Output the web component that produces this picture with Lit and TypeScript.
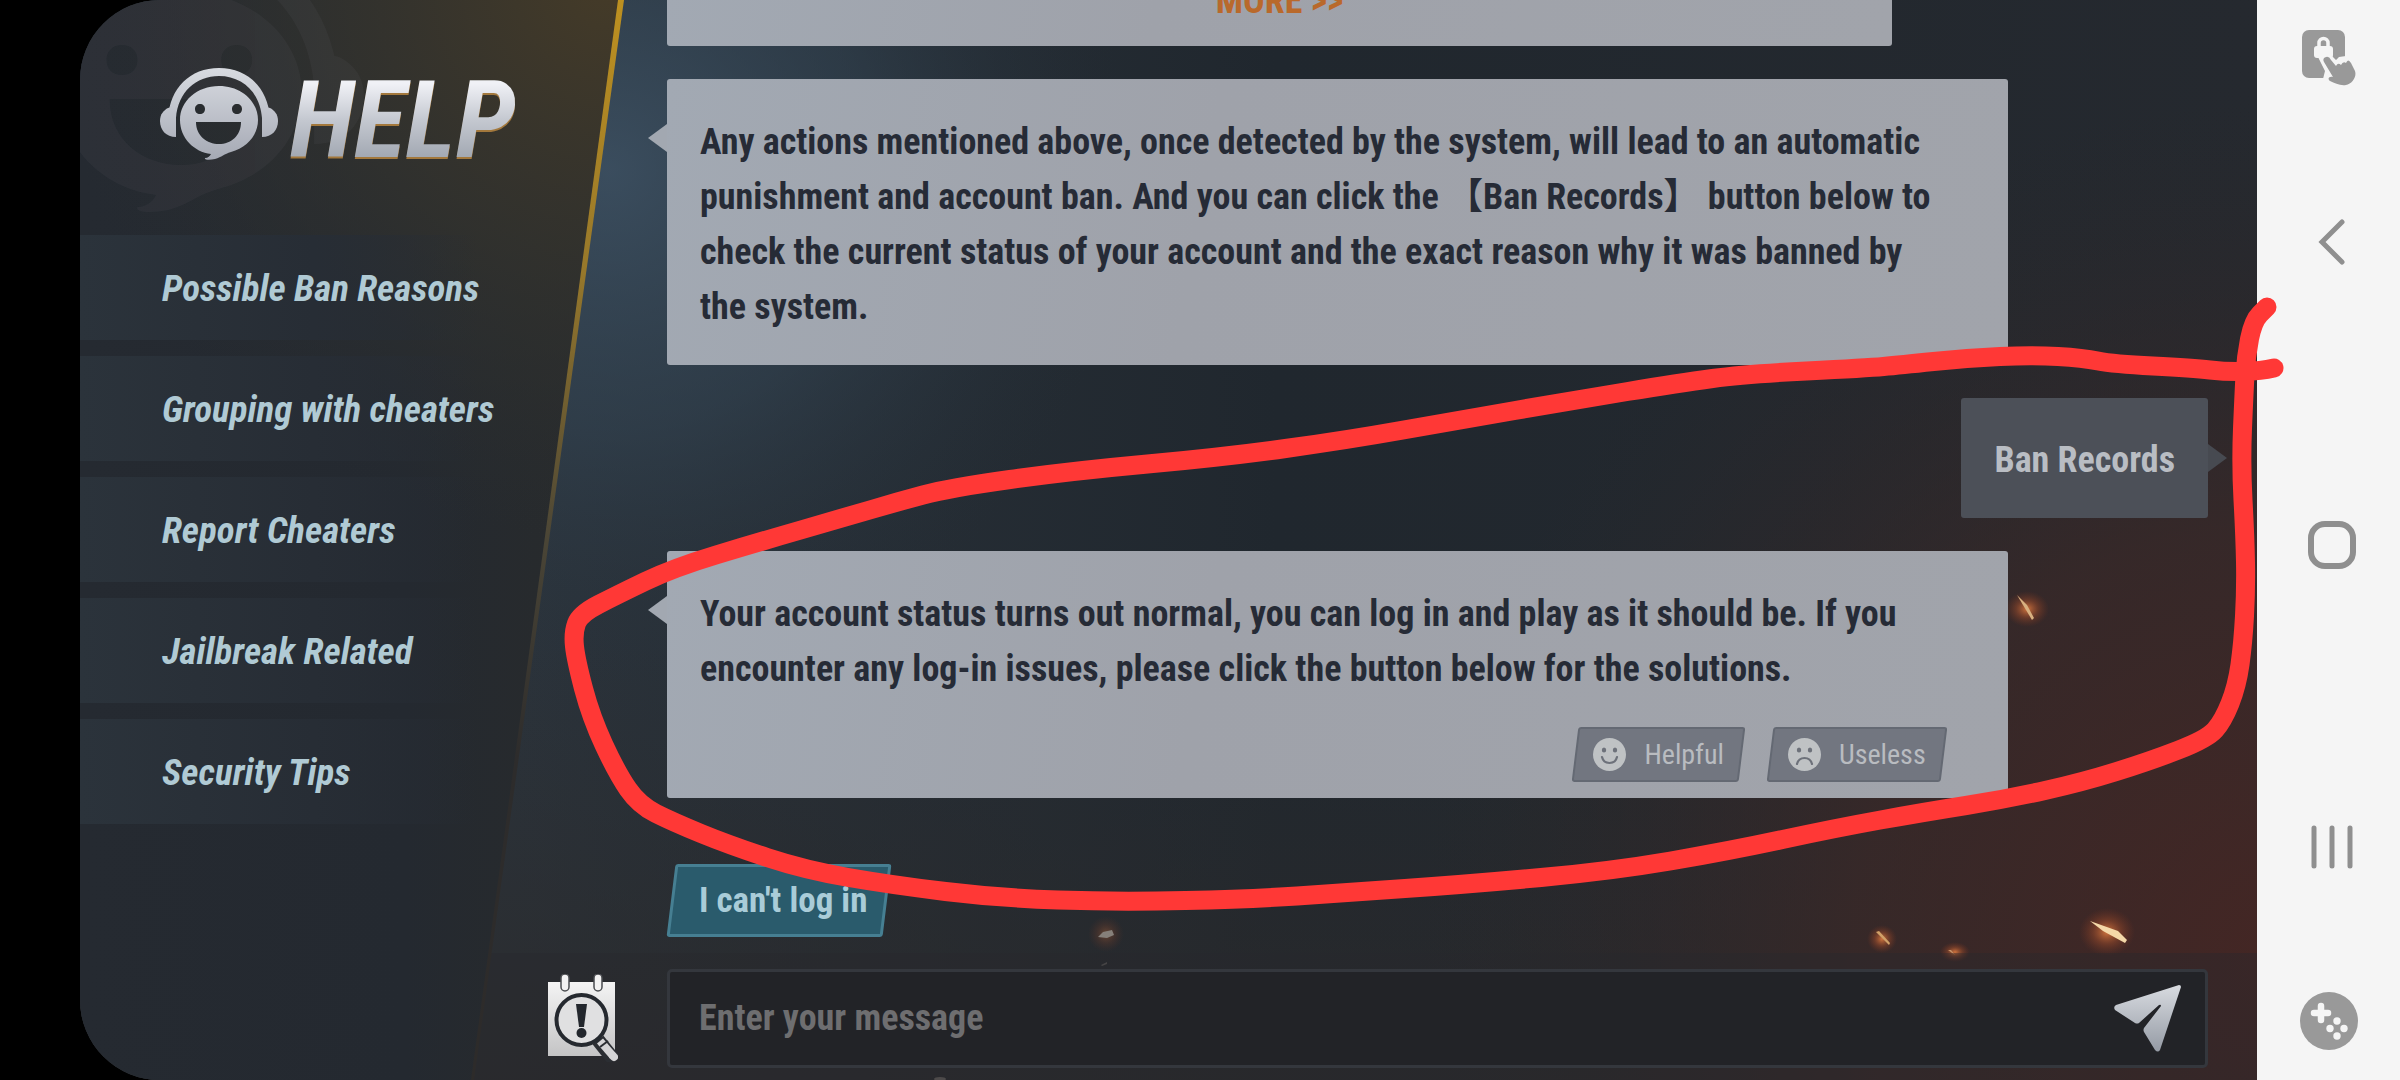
import { LitElement, html, css, svg } from "lit";
import { customElement } from "lit/decorators.js";

const MENU = [
  "Possible Ban Reasons",
  "Grouping with cheaters",
  "Report Cheaters",
  "Jailbreak Related",
  "Security Tips",
];

type Point = [number, number];

// Freehand marker: a loop around the last answer.
const MARKER: Point[] = [
  [2274, 368], [2261, 371], [2227, 372], [2193, 368], [2113, 364], [2083, 358],
  [2033, 355], [1967, 358], [1900, 365], [1867, 368], [1746, 374], [1679, 383],
  [1576, 400], [1454, 421], [1347, 440], [1224, 457], [1071, 471], [949, 488],
  [897, 502], [846, 517], [759, 542], [673, 568], [617, 595], [580, 614],
  [573, 633], [576, 660], [591, 717], [617, 773], [639, 805], [673, 822],
  [729, 845], [805, 870], [892, 885], [999, 898], [1117, 902], [1254, 899],
  [1340, 893], [1470, 884], [1612, 871], [1729, 851], [1836, 828], [1925, 812],
  [2007, 799], [2083, 782], [2150, 761], [2207, 739], [2223, 721], [2237, 686],
  [2243, 643], [2246, 589], [2245, 536], [2241, 464], [2244, 393], [2246, 357],
  [2253, 321], [2267, 307],
];

function smooth(points: Point[]): string {
  let d = `M${points[0][0]} ${points[0][1]}`;
  for (let i = 1; i < points.length - 1; i++) {
    const [x, y] = points[i];
    const [nx, ny] = points[i + 1];
    d += `Q${x} ${y} ${(x + nx) / 2} ${(y + ny) / 2}`;
  }
  const last = points[points.length - 1];
  return `${d}L${last[0]} ${last[1]}`;
}

const headset = svg`
  <path d="M8 50C10 20 30 0 59 0s49 20 51 50h-8C100 24 82 8 59 8S18 24 16 50z"/>
  <path d="M16 38v31C6 69 0 62 0 53c0-7 4-11 8-13z"/>
  <path d="M102 38v31c10 0 16-7 16-16 0-7-4-11-8-13z"/>
  <path fill-rule="evenodd" d="M59 18C37 18 20 33 20 52c0 18 14 32 31 34-1 2-3 4-6 4-1 2 5 2 10 1 7-2 9-5 16-7 16-4 27-17 27-32 0-19-17-34-39-34zM40 36c3 0 5 2 5 5s-2 5-5 5-5-2-5-5 2-5 5-5zM77 36c3 0 5 2 5 5s-2 5-5 5-5-2-5-5 2-5 5-5zM36 54h45c0 14-10 22-22 22s-23-8-23-22z"/>`;

@customElement("game-backdrop")
export class GameBackdrop extends LitElement {
  static styles = css`
    :host { display: block; }
    .art { display: block; width: 100%; height: 100%; }
  `;

  render() {
    return html`<svg class="art" viewBox="0 0 2177 1080" preserveAspectRatio="none" aria-hidden="true">
      <defs>
        <linearGradient id="base" x1="0" y1="0" x2="1" y2="0">
          <stop offset="0.2" stop-color="#2b333b"/>
          <stop offset="0.55" stop-color="#20272e"/>
          <stop offset="1" stop-color="#25292f"/>
        </linearGradient>
        <radialGradient id="blue" gradientUnits="userSpaceOnUse" cx="530" cy="170" r="520">
          <stop offset="0" stop-color="#40566a" stop-opacity="0.75"/>
          <stop offset="0.5" stop-color="#35495a" stop-opacity="0.45"/>
          <stop offset="1" stop-color="#25303a" stop-opacity="0"/>
        </radialGradient>
        <radialGradient id="ember" gradientUnits="userSpaceOnUse" cx="2200" cy="960" r="860">
          <stop offset="0" stop-color="#472623" stop-opacity="0.9"/>
          <stop offset="0.5" stop-color="#3a2827" stop-opacity="0.8"/>
          <stop offset="1" stop-color="#2a2729" stop-opacity="0"/>
        </radialGradient>
        <linearGradient id="floor" x1="0" y1="0" x2="0" y2="1">
          <stop offset="0.6" stop-color="#292a2c" stop-opacity="0"/>
          <stop offset="1" stop-color="#2b2a2b" stop-opacity="0.8"/>
        </linearGradient>
        <linearGradient id="panel" x1="0" y1="0" x2="1" y2="0">
          <stop offset="0" stop-color="#252a31"/>
          <stop offset="0.6" stop-color="#242930"/>
          <stop offset="1" stop-color="#292b2b"/>
        </linearGradient>
        <radialGradient id="olive" gradientUnits="userSpaceOnUse" cx="530" cy="-20" r="560">
          <stop offset="0" stop-color="#453b28"/>
          <stop offset="0.5" stop-color="#34332d" stop-opacity="0.75"/>
          <stop offset="1" stop-color="#2b2f30" stop-opacity="0"/>
        </radialGradient>
        <linearGradient id="gold" x1="0" y1="0" x2="0" y2="1">
          <stop offset="0" stop-color="#bd9020"/>
          <stop offset="0.25" stop-color="#97782b"/>
          <stop offset="0.5" stop-color="#4a4536"/>
          <stop offset="0.7" stop-color="#2d2c2c"/>
          <stop offset="1" stop-color="#2d2b2a"/>
        </linearGradient>
        <radialGradient id="glow">
          <stop offset="0" stop-color="#e07c40" stop-opacity="0.9"/>
          <stop offset="0.5" stop-color="#9a4a2a" stop-opacity="0.5"/>
          <stop offset="1" stop-color="#7a3420" stop-opacity="0"/>
        </radialGradient>
      </defs>
      <rect width="2177" height="1080" fill="url(#base)"/>
      <rect width="2177" height="1080" fill="url(#blue)"/>
      <rect width="2177" height="1080" fill="url(#floor)"/>
      <rect width="2177" height="1080" fill="url(#ember)"/>
      <ellipse cx="1947" cy="609" rx="22" ry="18" fill="url(#glow)"/>
      <path d="M1937 595l6 10 9 15 2-2-7-13z" fill="#d8b080"/>
      <ellipse cx="2027" cy="932" rx="28" ry="24" fill="url(#glow)"/>
      <path d="M2010 921l13 10 22 12 2-3-9-9-14-5z" fill="#f4d8a8"/>
      <ellipse cx="1802" cy="939" rx="15" ry="14" fill="url(#glow)"/>
      <path d="M1796 932l13 13 1-2-11-12z" fill="#d0a068"/>
      <ellipse cx="1875" cy="952" rx="15" ry="10" fill="url(#glow)"/>
      <path d="M1868 950l7 5-4-5z" fill="#c89468"/>
      <ellipse cx="1026" cy="934" rx="18" ry="18" fill="url(#glow)" opacity="0.4"/>
      <path d="M1018 937l5-5 9-2 2 5-7 3z" fill="#86807a"/>
      <path d="M1021 965l6-3 0 2-5 2z" fill="#5a5856"/>
      <ellipse cx="860" cy="1079" rx="6" ry="2" fill="#66615e"/>
      <path d="M409 953H2177V1080H392z" fill="#27292c" opacity="0.4"/>
      <path d="M0 0H542L392 1080H0z" fill="url(#panel)"/>
      <path d="M0 0H542L392 1080H0z" fill="url(#olive)"/>
      <path d="M538 0h6L394 1080h-3z" fill="url(#gold)"/>
      <g transform="translate(-82 -63) scale(3.1 3)" fill="#8a8494" opacity="0.07">${headset}</g>
    </svg>`;
  }
}

@customElement("help-sidebar")
export class HelpSidebar extends LitElement {
  static styles = css`
    :host { display: block; }
    .brand { display: flex; height: 235px; box-sizing: border-box; padding: 68px 0 0 80px; gap: 12px; }
    .face { width: 118px; height: 92px; flex: none; }
    .title {
      margin: 0; font-size: 108px; line-height: 104px; height: 104px; font-style: italic; font-weight: 700;
      background: linear-gradient(#f0f1f6 15%, #c4c8d0 50%, #a3a9b3 85%);
      -webkit-background-clip: text; background-clip: text; color: transparent;
      filter: drop-shadow(0 2px 0 #a3783c); padding-right: 8px;
    }
    .menu { display: flex; flex-direction: column; gap: 16px; }
    .item {
      height: 105px; padding: 2px 0 0 82px; border: 0; text-align: left; font: inherit;
      font-style: italic; font-weight: 700; font-size: 37px; color: #b0cad4; white-space: nowrap;
      background: linear-gradient(90deg, #2b333b, #272d35 50%, rgba(37, 41, 49, 0) 85%);
    }
  `;

  render() {
    return html`
      <header class="brand">
        <svg class="face" viewBox="0 0 118 92" aria-hidden="true">
          <defs><linearGradient id="steel" gradientUnits="userSpaceOnUse" x1="0" y1="0" x2="0" y2="92">
            <stop offset="0" stop-color="#d8dbe1"/><stop offset="1" stop-color="#a5a9b4"/>
          </linearGradient></defs>
          <g fill="url(#steel)">${headset}</g>
        </svg>
        <h1 class="title">HELP</h1>
      </header>
      <nav class="menu" aria-label="Help topics">
        ${MENU.map((label) => html`<button class="item">${label}</button>`)}
      </nav>`;
  }
}

@customElement("chat-panel")
export class ChatPanel extends LitElement {
  static styles = css`
    :host { display: flex; flex-direction: column; min-width: 0; }
    .log {
      flex: 1 1 0; min-height: 0; overflow: hidden; display: flex; flex-direction: column;
      justify-content: flex-end; gap: 33px; padding: 0 49px 16px 119px;
    }
    .bubble {
      position: relative; flex: none; box-sizing: border-box; width: 87%; padding: 36px 60px 30px 33px;
      background: linear-gradient(100deg, #a2a9b3, #9fa2aa 40%, #a1a4ab); border-radius: 3px;
      color: #262b36; font-size: 36px; line-height: 55px; font-weight: 700;
    }
    .bubble p { margin: 0; }
    .bubble.tail::before {
      content: ""; position: absolute; left: -19px; top: 45px; width: 19px; height: 28px;
      background: #a2a8b1; clip-path: polygon(0 50%, 100% 0, 100% 100%);
    }
    .bubble.more { width: 79.5%; padding: 0 0 17px; text-align: center; }
    .link { color: #b9692b; text-decoration: none; }
    .bubble.mine {
      align-self: flex-end; width: auto; padding: 35px 33px 30px; background: #4c5058; color: #b9bdc3;
    }
    .bubble.mine::after {
      content: ""; position: absolute; right: -19px; top: 46px; width: 19px; height: 28px;
      background: #474a51; clip-path: polygon(0 0, 100% 50%, 0 100%);
    }
    .bubble.rated { padding-bottom: 16px; }
    .rating { display: flex; justify-content: flex-end; gap: 20px; padding-top: 30px; }
    .slanted {
      position: relative; z-index: 0; border: 0; background: none; font: inherit;
      display: flex; align-items: center; white-space: nowrap;
    }
    .slanted::before {
      content: ""; position: absolute; inset: 0 4px; z-index: -1; transform: skewX(-7deg);
      box-sizing: border-box; border-radius: 3px;
    }
    .rate { height: 55px; padding: 0 22px; gap: 18px; font-size: 28px; line-height: 34px; color: #b9bcc0; font-weight: 400; }
    .rate::before { background: #727680; border: 2px solid #646973; }
    .mood { width: 33px; height: 33px; flex: none; }
    .chips { display: flex; padding-top: 33px; }
    .chip { height: 73px; padding: 0 24px 0 32px; font-size: 35px; color: #a9ccd8; font-weight: 700; }
    .chip::before { background: #2a5b6c; border: 3px solid #467f92; }
    .composer { display: flex; align-items: center; height: 127px; box-sizing: border-box; gap: 49px; padding: 3px 49px 0 0; }
    .icon { flex: none; padding: 0; border: 0; background: none; display: block; }
    .records { width: 70px; height: 88px; }
    .art { display: block; width: 100%; height: 100%; }
    .field {
      flex: 1; min-width: 0; height: 99px; box-sizing: border-box; display: flex; align-items: center;
      padding: 0 24px 0 29px; border: 3px solid #34373d; border-radius: 5px; background: #222327;
    }
    .entry {
      flex: 1; min-width: 0; height: 90px; padding: 0; border: 0; outline: 0; background: none;
      font: inherit; font-size: 36px; font-weight: 700; color: #b9bdc3;
    }
    .entry::placeholder { color: #6e6e70; opacity: 1; }
    .send { width: 67px; height: 67px; }
  `;

  private mood(happy: boolean) {
    return html`<svg class="mood" viewBox="0 0 33 33" aria-hidden="true">
      <circle cx="16.5" cy="16.5" r="16.5" fill="#bfc2c4"/>
      <ellipse cx="11" cy="12" rx="2.2" ry="2.6" fill="#6d717a"/>
      <ellipse cx="22" cy="12" rx="2.2" ry="2.6" fill="#6d717a"/>
      <path d=${happy ? "M9 19c2 8 13 8 15 0" : "M9 26c2-8 13-8 15 0"} fill="none" stroke="#6d717a" stroke-width="2.2" stroke-linecap="round"/>
    </svg>`;
  }

  render() {
    return html`
      <div class="log">
        <div class="bubble more"><a class="link" href="#more">MORE &gt;&gt;</a></div>
        <div class="bubble tail">
          <p>Any actions mentioned above, once detected by the system, will lead to an automatic punishment and account ban. And you can click the 【Ban Records】 button below to check the current status of your account and the exact reason why it was banned by the system.</p>
        </div>
        <div class="bubble mine">Ban Records</div>
        <div class="bubble tail rated">
          <p>Your account status turns out normal, you can log in and play as it should be. If you encounter any log-in issues, please click the button below for the solutions.</p>
          <div class="rating">
            <button class="slanted rate">${this.mood(true)}Helpful</button>
            <button class="slanted rate">${this.mood(false)}Useless</button>
          </div>
        </div>
        <div class="chips"><button class="slanted chip">I can't log in</button></div>
      </div>
      <div class="composer">
        <button class="icon records" aria-label="Records">
          <svg class="art" viewBox="0 0 70 88" aria-hidden="true">
            <defs><linearGradient id="paper" x1="0" y1="0" x2="0" y2="1">
              <stop offset="0" stop-color="#f4f4f4"/><stop offset="1" stop-color="#c4c4c5"/>
            </linearGradient></defs>
            <path d="M0 8H67V82H0z" fill="url(#paper)"/>
            <g fill="#f2f2f2" stroke="#4a4c50" stroke-width="1.5">
              <rect x="13" y="0" width="8" height="17" rx="4"/><rect x="46" y="0" width="8" height="17" rx="4"/>
            </g>
            <path d="M50 66L66 86" stroke="#2b2e33" stroke-width="14"/>
            <circle cx="33.5" cy="46" r="25" fill="#e0e0e1" stroke="#25292f" stroke-width="4"/>
            <path d="M52 67L65 82" stroke="#d4d4d6" stroke-width="8"/>
            <path d="M65 82l1 1" stroke="#d4d4d6" stroke-width="8" stroke-linecap="round"/>
            <path d="M52 73l8-6" stroke="#2b2e33" stroke-width="2"/>
            <path d="M28 30h11l-3 23h-5z" fill="#23272d"/><circle cx="33.5" cy="59" r="5" fill="#23272d"/>
          </svg>
        </button>
        <label class="field">
          <input class="entry" type="text" aria-label="Message" placeholder="Enter your message">
          <button class="icon send" aria-label="Send">
            <svg class="art" viewBox="0 0 67 67" aria-hidden="true">
              <defs><linearGradient id="plane" x1="0" y1="0" x2="0" y2="1">
                <stop offset="0" stop-color="#d8dbe0"/><stop offset="1" stop-color="#959ba5"/>
              </linearGradient></defs>
              <path d="M65 0Q67 0 67 2L46 65Q44 68 41 65L30 47Q29 45 30 43L47 21Q47 19 45 20L25 38Q23 39 21 38L1 25Q-1 22 2 20z" fill="url(#plane)"/>
            </svg>
          </button>
        </label>
      </div>`;
  }
}

@customElement("system-bar")
export class SystemBar extends LitElement {
  static styles = css`
    :host { display: flex; flex-direction: column; align-items: center; background: #f5f5f5; box-sizing: border-box; padding: 29px 0 30px; }
    .key { flex: none; display: block; padding: 0; border: 0; background: none; }
    .art { display: block; }
    .keys { flex: 1; display: flex; flex-direction: column; align-items: center; justify-content: space-between; padding: 133px 0 123px 6px; }
  `;

  render() {
    return html`
      <button class="key" aria-label="Touch lock">
        <svg class="art" width="54" height="57" viewBox="0 0 54 57" aria-hidden="true">
          <rect x="0" y="1" width="43" height="48" rx="7" fill="#999"/>
          <rect x="12" y="17" width="19" height="12" rx="3" fill="#f5f5f5"/>
          <path d="M17 18v-4a4.5 4.5 0 0 1 9 0v4" fill="none" stroke="#f5f5f5" stroke-width="3.5"/>
          <path d="M16 28L23 42 21 50 30 53 44 40V27L37 28 34 31 28 25z" fill="#f5f5f5"/>
          <path d="M22 33Q20 29 24 28 27 27 29 31L34 37Q36 33 39 36 41 32 44 34 46 29 49 34L53 42C55 48 50 55 44 56 38 57 33 54 28 52 25 50 27 47 31 48z" fill="#999"/>
        </svg>
      </button>
      <div class="keys">
        <button class="key" aria-label="Back">
          <svg class="art" width="28" height="46" viewBox="0 0 28 46" aria-hidden="true">
            <path d="M24 3L4 23 24 43" fill="none" stroke="#8f8f8f" stroke-width="5" stroke-linecap="round"/>
          </svg>
        </button>
        <button class="key" aria-label="Home">
          <svg class="art" width="48" height="48" viewBox="0 0 48 48" aria-hidden="true">
            <rect x="3" y="3" width="42" height="42" rx="14" fill="none" stroke="#8f8f8f" stroke-width="6"/>
          </svg>
        </button>
        <button class="key" aria-label="Recent apps">
          <svg class="art" width="42" height="44" viewBox="0 0 42 44" aria-hidden="true">
            <path d="M3 3v38M21 3v38M39 3v38" stroke="#8f8f8f" stroke-width="5" stroke-linecap="round"/>
          </svg>
        </button>
      </div>
      <button class="key" aria-label="Game tools">
        <svg class="art" width="58" height="58" viewBox="0 0 58 58" aria-hidden="true">
          <circle cx="29" cy="29" r="29" fill="#999"/>
          <path d="M21 14v14M14 21h14" stroke="#f5f5f5" stroke-width="6.5" stroke-linecap="round"/>
          <g fill="#f5f5f5"><circle cx="37" cy="29" r="3.7"/><circle cx="30" cy="36.5" r="3.7"/><circle cx="44" cy="36.5" r="3.7"/><circle cx="37" cy="44" r="3.7"/></g>
        </svg>
      </button>`;
  }
}

@customElement("app-root")
export class AppRoot extends LitElement {
  static styles = css`
    :host {
      display: block; position: relative; background: #000;
      font-family: "Roboto Condensed", "Liberation Sans Narrow", "Liberation Sans", "Noto Sans CJK SC", sans-serif;
    }
    .screen { display: grid; grid-template-columns: 80px minmax(0, 1fr) 143px; min-height: 100vh; }
    .game {
      grid-column: 2; position: relative; overflow: hidden; border-radius: 80px 0 0 80px;
      display: grid; grid-template-columns: 468px minmax(0, 1fr);
    }
    .backdrop { position: absolute; inset: 0; }
    .side { position: relative; }
    .chat { position: relative; }
    .marker { position: absolute; inset: 0; width: 100%; height: 100%; pointer-events: none; }
  `;

  render() {
    return html`
      <div class="screen">
        <main class="game">
          <game-backdrop class="backdrop"></game-backdrop>
          <help-sidebar class="side"></help-sidebar>
          <chat-panel class="chat"></chat-panel>
        </main>
        <system-bar></system-bar>
      </div>
      <svg class="marker" viewBox="0 0 2400 1080" preserveAspectRatio="none" aria-hidden="true">
        <path d=${smooth(MARKER)} fill="none" stroke="#ff3836" stroke-width="19" stroke-linecap="round" stroke-linejoin="round"/>
      </svg>`;
  }
}
